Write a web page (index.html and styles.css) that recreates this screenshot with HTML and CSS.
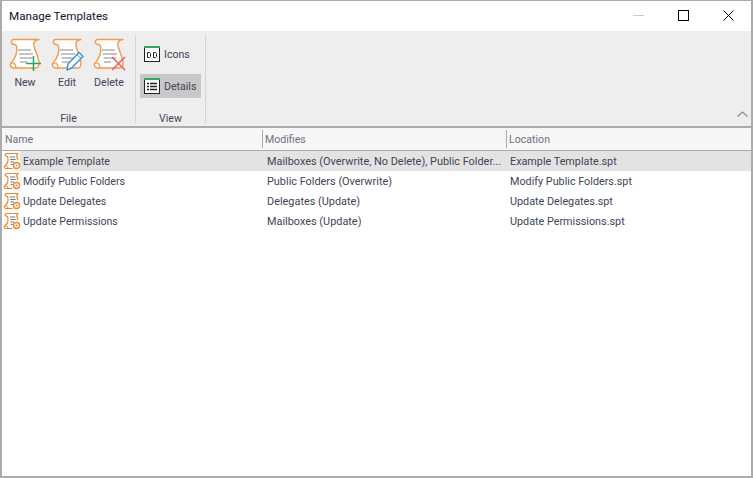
FILE: index.html
```html
<!DOCTYPE html>
<html lang="en">
<head>
    <meta charset="UTF-8">
    <title>Manage Templates</title>
    <link rel="stylesheet" href="styles.css">
</head>
<body>
    <svg class="defs" width="0" height="0">
        <symbol id="scroll" viewBox="0 0 32 32">
            <path d="M5 1.500H30C26 2 24 4 25 8C26 13 30 20 30 25C30 28 29 30 27 30H5C2 30 1 28 1.500 26C2.500 24 5 22 6 19C8 15 8 11 7.500 8C7 6 5 6.500 3.500 6C1.500 5 2 1.500 5 1.500z" fill="#fff" stroke="#f29a4a" stroke-width="1.400" stroke-linejoin="round"/>
            <path d="M1.500 26C4 24 7 25 7 30" fill="none" stroke="#f29a4a" stroke-width="1.200"/>
            <path d="M9 12h13M10 16h14M10.500 20h13M11 24h7" stroke="#8a8a8a" stroke-width="1.200" fill="none"/>
        </symbol>
        <symbol id="scroll-small" viewBox="0 0 18 18">
            <path d="M4 1.500H15.500C14 2 13.500 3.200 14 5L14.800 8" fill="none" stroke="#f0862a" stroke-width="1.200"/>
            <path d="M9.500 16.500H3C1 16.500 .8 15 1.700 14C2.800 13 4.200 12 4.700 10C5.200 8 5 6.500 4.700 5C4.400 4 3 4.200 2.300 3.500C1.700 2.800 2 1.500 4 1.500" fill="none" stroke="#f0862a" stroke-width="1.200"/>
            <path d="M1.700 14C3 13.300 5 14 5 16.500" fill="none" stroke="#f0862a"/>
            <path d="M6.800 5h5.500M7.200 7.500h5.500M7.500 10h3.500M7.800 12.500h2" stroke="#777" fill="none"/>
            <circle cx="13.500" cy="13.500" r="3" fill="#fff" stroke="#f0862a" stroke-width="1.300"/>
            <circle cx="13.500" cy="13.500" r=".9" fill="#f0862a"/>
        </symbol>
    </svg>

    <div class="window">
        <div class="titlebar">
            <span class="title">Manage Templates</span>
            <div class="controls">
                <span class="ctl"><svg width="11" height="11"><path d="M0 5.500h11" stroke="#ccc"/></svg></span>
                <span class="ctl"><svg width="11" height="11"><rect x=".5" y=".5" width="10" height="10" fill="none" stroke="#000"/></svg></span>
                <span class="ctl"><svg width="11" height="11"><path d="M.5 .5l10 10M10.500 .5l-10 10" stroke="#000" fill="none"/></svg></span>
            </div>
        </div>

        <div class="ribbon">
            <div class="group group-file">
                <div class="group-body">
                    <div class="bigbtn">
                        <svg class="bigicon" viewBox="0 0 33 33"><use href="#scroll" width="32" height="32"/><path d="M24.500 18v15M17 25.500h15" stroke="#1fa85a" stroke-width="1.500" fill="none"/></svg>
                        <span>New</span>
                    </div>
                    <div class="bigbtn">
                        <svg class="bigicon" viewBox="0 0 33 33"><use href="#scroll" width="32" height="32"/><path d="M16 32l1-6L28 14.500l4 4L20.500 30z" fill="#fff" stroke="#3a96dc" stroke-width="1.500" stroke-linejoin="round"/><path d="M26 16.500l4 4" stroke="#3a96dc"/></svg>
                        <span>Edit</span>
                    </div>
                    <div class="bigbtn">
                        <svg class="bigicon" viewBox="0 0 33 33"><use href="#scroll" width="32" height="32"/><path d="M19 19l13 13M32 19L19 32" stroke="#ee5f6b" stroke-width="1.600" fill="none"/></svg>
                        <span>Delete</span>
                    </div>
                </div>
                <div class="group-label">File</div>
            </div>
            <div class="group group-view">
                <div class="group-body view-body">
                    <div class="smallbtn">
                        <svg width="16" height="16"><rect x=".5" y=".5" width="15" height="15" fill="#fff" stroke="#222"/><rect x="0" y="0" width="16" height="2" fill="#2fa866"/><path d="M3.500 6.500h2l1 1v3l-1 1h-2zM9.500 6.500h2l1 1v3l-1 1h-2z" fill="none" stroke="#222"/></svg>
                        <span>Icons</span>
                    </div>
                    <div class="smallbtn active">
                        <svg width="16" height="16"><rect x=".5" y=".5" width="15" height="15" fill="#fff" stroke="#222"/><rect x="0" y="0" width="16" height="2" fill="#2fa866"/><path d="M3 5.500h2M6 5.500h7M3 8.500h2M6 8.500h7M3 11.500h2M6 11.500h7" stroke="#222" stroke-width="1.400"/></svg>
                        <span>Details</span>
                    </div>
                </div>
                <div class="group-label">View</div>
            </div>
            <svg class="collapse" width="11" height="6"><path d="M.5 5.500l5-4.500 5 4.500" fill="none" stroke="#8c8c8c" stroke-width="1.300"/></svg>
        </div>

        <div class="list">
            <div class="list-head">
                <div class="col col-name">Name</div>
                <div class="col col-mod">Modifies</div>
                <div class="col col-loc">Location</div>
            </div>
            <div class="row selected">
                <div class="col col-name"><svg class="rowicon"><use href="#scroll-small"/></svg><span>Example Template</span></div>
                <div class="col col-mod">Mailboxes (Overwrite, No Delete), Public Folder...</div>
                <div class="col col-loc">Example Template.spt</div>
            </div>
            <div class="row">
                <div class="col col-name"><svg class="rowicon"><use href="#scroll-small"/></svg><span>Modify Public Folders</span></div>
                <div class="col col-mod">Public Folders (Overwrite)</div>
                <div class="col col-loc">Modify Public Folders.spt</div>
            </div>
            <div class="row">
                <div class="col col-name"><svg class="rowicon"><use href="#scroll-small"/></svg><span>Update Delegates</span></div>
                <div class="col col-mod">Delegates (Update)</div>
                <div class="col col-loc">Update Delegates.spt</div>
            </div>
            <div class="row">
                <div class="col col-name"><svg class="rowicon"><use href="#scroll-small"/></svg><span>Update Permissions</span></div>
                <div class="col col-mod">Mailboxes (Update)</div>
                <div class="col col-loc">Update Permissions.spt</div>
            </div>
        </div>
    </div>
</body>
</html>
```

FILE: styles.css
```css
* {
    padding: 0;
    margin: 0;
    box-sizing: border-box;
}
html, body {
    height: 100%;
    overflow: hidden;
}
body {
    font-family: Roboto, "Noto Sans", sans-serif;
    font-size: 10.600px;
    color: #3f4456;
    background: #fff;
}
.defs {
    display: block;
    height: 0;
}
.window {
    width: 753px;
    height: 478px;
    display: flex;
    flex-direction: column;
    border: 2px solid #ababab;
    border-top-width: 1px;
}

/* title bar */
.titlebar {
    height: 30px;
    padding-bottom: 1px;
    display: flex;
    align-items: center;
    justify-content: space-between;
    background: #fff;
    flex-shrink: 0;
}
.title {
    margin-left: 7px;
    font-size: 11.650px;
    color: #15102e;
}
.controls {
    display: flex;
}
.ctl {
    width: 45px;
    height: 28px;
    display: flex;
    align-items: center;
    justify-content: center;
}

/* ribbon */
.ribbon {
    height: 97px;
    flex-shrink: 0;
    display: flex;
    position: relative;
    background: #eee;
    border-bottom: 2px solid #ababab;
}
.group {
    display: flex;
    flex-direction: column;
    height: 88px;
    margin-top: 4px;
    border-right: 1px solid #d4d4d4;
}
.group-file {
    width: 134px;
}
.group-view {
    width: 70px;
}
.group-body {
    flex: 1;
    display: flex;
    padding-left: 2px;
}
.view-body {
    flex-direction: column;
    padding: 7px 0 0 4px;
    gap: 8px;
}
.group-label {
    height: 10px;
    text-align: center;
    line-height: 12px;
}
.bigbtn {
    width: 42px;
    display: flex;
    flex-direction: column;
    align-items: center;
    padding-top: 3px;
}
.bigicon {
    width: 33px;
    height: 33px;
    margin-bottom: 5px;
}
.smallbtn {
    width: 61px;
    height: 24px;
    display: flex;
    align-items: center;
    gap: 4px;
    padding-left: 4px;
}
.active {
    background: #c8c8c8;
}
.collapse {
    position: absolute;
    right: 3px;
    bottom: 9px;
}

/* list */
.list {
    flex: 1;
    background: #fff;
}
.list-head {
    height: 23px;
    display: flex;
    background: #f7f7f7;
    border-bottom: 1px solid #ababab;
    color: #6d7080;
}
.list-head .col {
    display: flex;
    align-items: center;
    padding-left: 3px;
}
.list-head .col-mod,
.list-head .col-loc {
    padding-left: 2px;
    border-left: 1px solid #ababab;
    margin: 2px 0;
}
.row {
    height: 20px;
    display: flex;
    align-items: center;
}
.col {
    white-space: nowrap;
    overflow: hidden;
}
.col-name {
    width: 260px;
    flex-shrink: 0;
    display: flex;
    align-items: center;
}
.col-mod {
    width: 244px;
    flex-shrink: 0;
    padding-left: 5px;
}
.col-loc {
    flex: 1;
    padding-left: 4px;
}
.row .col-mod {
    font-size: 10.900px;
}
.row .col-loc {
    font-size: 10.800px;
}
.rowicon {
    width: 18px;
    height: 18px;
    margin: 0 2px 0 1px;
    flex-shrink: 0;
}
.selected {
    background: linear-gradient(to right, #fff 18px, #e3e3e3 18px);
}
```
